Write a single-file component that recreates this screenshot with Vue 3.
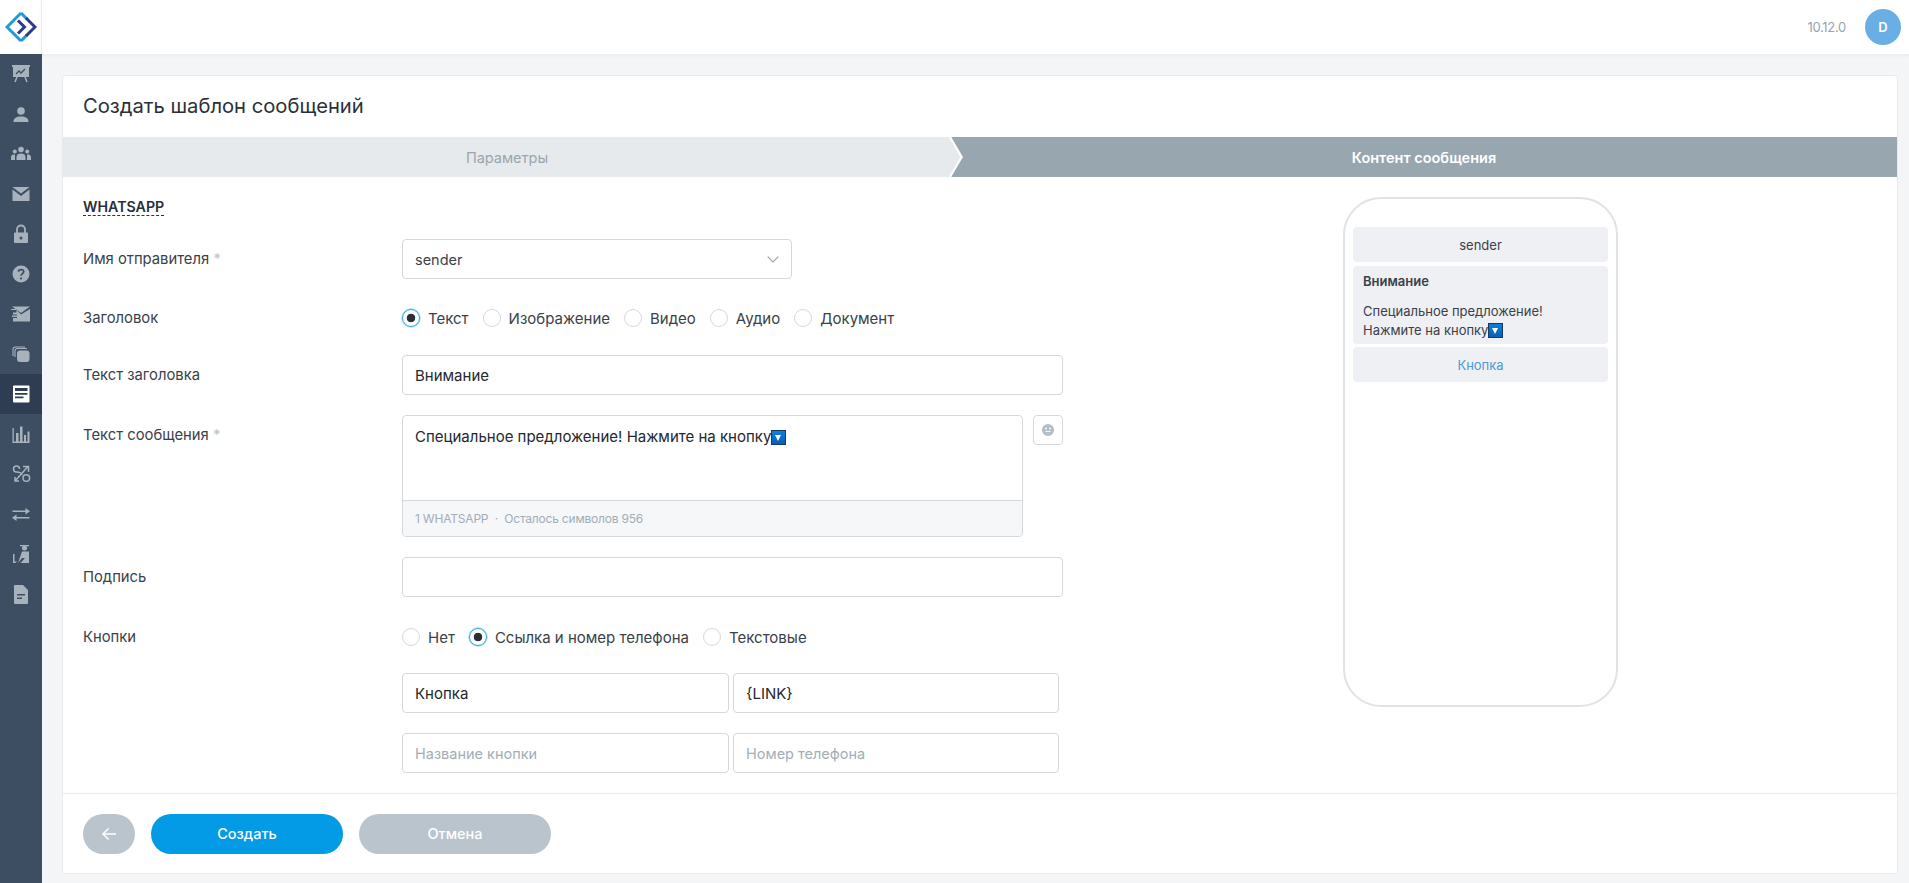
<template>
  <div class="app">
    <aside class="sidebar">
      <div class="logo">
        <svg width="32" height="32" viewBox="0 0 32 32" fill="none">
          <path d="M16 2 2 16 16 30" stroke="#1e9ad6" stroke-width="3" />
          <path d="M16 2 22 8M22 24 16 30" stroke="#1e9ad6" stroke-width="3" />
          <path d="M21 7 30 16 21 25" stroke="#2b3a8f" stroke-width="3" />
          <path d="M13 9.500 19.500 16 13 22.500" stroke="#2b3a8f" stroke-width="3" />
        </svg>
      </div>
      <nav class="nav">
        <div v-for="item in navItems" :key="item.id" class="nav-item" :class="{ active: item.id === 'templates' }">
          <svg width="22" height="22" viewBox="0 0 22 22" v-html="item.svg"></svg>
        </div>
      </nav>
    </aside>

    <div class="main">
      <header class="topbar">
        <span class="version">10.12.0</span>
        <span class="avatar">D</span>
      </header>

      <div class="content">
        <section class="card">
          <h1 class="card-title">Создать шаблон сообщений</h1>

          <div class="steps">
            <div class="step">Параметры</div>
            <div class="step step-active">Контент сообщения</div>
            <svg class="step-chevron" width="16" height="40" viewBox="0 0 16 40" fill="none"><path d="M1 0 12.500 20 1 40" stroke="#fff" stroke-width="2" /></svg>
          </div>

          <div class="body">
            <div class="form">
              <h2 class="channel"><span>WHATSAPP</span></h2>

              <div class="row row-select">
                <label class="label">Имя отправителя <i>*</i></label>
                <div class="select">
                  <span>sender</span>
                  <svg width="12" height="7" viewBox="0 0 12 7" fill="none"><path d="M.7.7 6 6l5.300-5.300" stroke="#9aa6b0" stroke-width="1.200" /></svg>
                </div>
              </div>

              <div class="row row-radio">
                <label class="label">Заголовок</label>
                <div class="radios">
                  <span v-for="opt in headerTypes" :key="opt" class="radio" :class="{ on: opt === 'Текст' }">{{ opt }}</span>
                </div>
              </div>

              <div class="row row-input">
                <label class="label">Текст заголовка</label>
                <div class="input">Внимание</div>
              </div>

              <div class="row row-text">
                <label class="label">Текст сообщения <i>*</i></label>
                <div class="textarea-wrap">
                  <div class="textarea">
                    <div class="textarea-text">Специальное предложение! Нажмите на кнопку<span class="down-emoji"></span></div>
                    <div class="textarea-foot">1 WHATSAPP &nbsp;·&nbsp; Осталось символов 956</div>
                  </div>
                  <button class="emoji-btn">
                    <svg width="12" height="12" viewBox="0 0 12 12"><circle cx="6" cy="6" r="6" fill="#b4bec7" /><circle cx="4" cy="4.500" r=".9" fill="#fff" /><circle cx="8" cy="4.500" r=".9" fill="#fff" /><path d="M3.500 7.500h5" stroke="#fff" stroke-width=".9" /></svg>
                  </button>
                </div>
              </div>

              <div class="row row-input row-sign">
                <label class="label">Подпись</label>
                <div class="input"></div>
              </div>

              <div class="row row-radio row-buttons">
                <label class="label">Кнопки</label>
                <div class="radios">
                  <span v-for="opt in buttonTypes" :key="opt" class="radio" :class="{ on: opt === 'Ссылка и номер телефона' }">{{ opt }}</span>
                </div>
              </div>

              <div class="pairs">
                <div class="input">Кнопка</div>
                <div class="input">{LINK}</div>
                <div class="input placeholder">Название кнопки</div>
                <div class="input placeholder">Номер телефона</div>
              </div>
            </div>

            <div class="preview">
              <div class="phone">
                <div class="bubble sender">sender</div>
                <div class="bubble message">
                  <strong>Внимание</strong>
                  <p>Специальное предложение!<br />Нажмите на кнопку<span class="down-emoji"></span></p>
                </div>
                <div class="bubble link">Кнопка</div>
              </div>
            </div>
          </div>

          <footer class="actions">
            <button class="btn btn-back">
              <svg width="16" height="14" viewBox="0 0 16 14" fill="none"><path d="M15 7H2M7.500 1.500 2 7l5.500 5.500" stroke="#fff" stroke-width="1.500" /></svg>
            </button>
            <button class="btn btn-primary">Создать</button>
            <button class="btn btn-muted">Отмена</button>
          </footer>
        </section>
      </div>
    </div>
  </div>
</template>

<script setup>
const headerTypes = ['Текст', 'Изображение', 'Видео', 'Аудио', 'Документ']
const buttonTypes = ['Нет', 'Ссылка и номер телефона', 'Текстовые']

const c = '#a7b2bd'
const navItems = [
  { id: 'dash', svg: `<path fill="${c}" d="M2 2h18v2h-1v10H3V4H2z"/><path d="M6 11l3-3 2 2 4-4" fill="none" stroke="#3e4e62" stroke-width="1.300"/><path d="M7 14l-2 5M15 14l2 5" stroke="${c}" stroke-width="1.500"/>` },
  { id: 'user', svg: `<circle cx="11" cy="8" r="3.800" fill="${c}"/><path fill="${c}" d="M3.500 19c0-4 3-5.500 7.500-5.500s7.500 1.500 7.500 5.500z"/>` },
  { id: 'group', svg: `<circle cx="11" cy="6.500" r="2.800" fill="${c}"/><circle cx="4.800" cy="8.500" r="2" fill="${c}"/><circle cx="17.200" cy="8.500" r="2" fill="${c}"/><path fill="${c}" d="M6.500 17v-3c0-2.500 2-3.500 4.500-3.500s4.500 1 4.500 3.500v3zM1 17v-2.500C1 12 2.500 11.500 5 11.500 4.900 13 5 15 5 17zM21 17v-2.500c0-2.500-1.500-3-4-3 .1 1.500 0 3.500 0 5.500z"/>` },
  { id: 'mail', svg: `<path fill="${c}" d="M2.500 4h17L11 10.500zM2.500 6.500 11 13l8.500-6.500V18h-17z"/>` },
  { id: 'lock', svg: `<path fill="none" stroke="${c}" stroke-width="1.800" d="M7 10V6.500a4 4 0 0 1 8 0V10"/><path fill="${c}" fill-rule="evenodd" d="M5 9.500h12a1 1 0 0 1 1 1V19a1 1 0 0 1-1 1H5a1 1 0 0 1-1-1v-8.500a1 1 0 0 1 1-1zM11 13.500a1.500 1.500 0 1 0 0 3 1.500 1.500 0 0 0 0-3z"/>` },
  { id: 'help', svg: `<circle cx="11" cy="11" r="8.500" fill="${c}"/><path d="M8.500 8.800c0-3 5.200-3 5.200 0 0 1.900-2.600 1.900-2.600 3.900" fill="none" stroke="#3e4e62" stroke-width="1.700"/><circle cx="11" cy="15.500" r="1.100" fill="#3e4e62"/>` },
  { id: 'send', svg: `<path fill="${c}" d="M2 3.500h18L11 10zM1 6h5v1H1zM6.500 7 11 11.500 20 6v12.500H3V15h4v-1H2v-1.500h5v-1H3V9.500h3.500z"/>` },
  { id: 'stack', svg: `<path fill="none" stroke="${c}" stroke-width="1.100" d="M3 13V6.500C3 4.800 4 4 5.500 4H15M5 14V8c0-1.700 1-2.500 2.500-2.500H17"/><rect x="7" y="7.500" width="12.500" height="11.500" rx="3" fill="${c}"/>` },
  { id: 'templates', svg: `<path fill="#fff" fill-rule="evenodd" d="M4 2.500h14.500a1 1 0 0 1 1 1v15a1 1 0 0 1-1 1H4a1 1 0 0 1-1-1v-15a1 1 0 0 1 1-1zM5 5v3h12.500V5zM5 10v1.800h12.500V10zM5 13.500v1.800h8.500v-1.800z"/>` },
  { id: 'stats', svg: `<path fill="${c}" d="M2.500 5h1.300v13.500H2.500zM6 10h2.500v8.500H6zM10 3.500h2.500v15H10zM14 12h2v6.500h-2zM17.500 8.500H19.500v10h-2zM2.500 18.500h17V20h-17z"/>` },
  { id: 'routes', svg: `<path fill="none" stroke="${c}" stroke-width="1.500" d="M17.500 4 5 18M9.500 6a3 3 0 1 0-3 3c3 0 5 .5 5.500 3M5 14v4h4M13 15a3.300 3.300 0 1 0 6.600 0 3.300 3.300 0 0 0-6.600 0zM13 3.500h5.500V9"/>` },
  { id: 'transfer', svg: `<path fill="${c}" d="M2.500 7.500h13V5l4.500 3.300-4.500 3.300V9h-13zM6.500 11.500V14h13v1.500h-13V18L2 14.800z"/>` },
  { id: 'report', svg: `<circle cx="14.500" cy="5" r="2.500" fill="${c}"/><path fill="${c}" d="M10 2h9v1.200h-9zM12 8.500h7v11.500h-8.500L15 15l-3 0-4 5H8zM3 11h1.500v7.500H7L5.500 20H3z"/>` },
  { id: 'doc', svg: `<path fill="${c}" fill-rule="evenodd" d="M5 2h8l5 5v13a1 1 0 0 1-1 1H5a1 1 0 0 1-1-1V3a1 1 0 0 1 1-1zM7 11v1.500h8V11zM7 14.500V16h5v-1.500z"/>` }
]
</script>

<style>
html, body { margin: 0; background: #f3f5f7; }
</style>

<style scoped>
.app {
  display: flex;
  height: 883px;
  overflow: hidden;
  font-family: Inter, "Noto Sans", sans-serif;
  color: #2f3640;
}

.sidebar {
  width: 42px;
  flex: none;
  display: flex;
  flex-direction: column;
  background: #3e4e62;
}

.logo {
  height: 54px;
  display: flex;
  align-items: center;
  justify-content: center;
  background: #fff;
  border-right: 1px solid #eef0f2;
  box-sizing: border-box;
}

.nav-item {
  height: 40px;
  display: flex;
  align-items: center;
  justify-content: center;
}
.nav-item.active { background: #2e3d51; }

.main {
  flex: 1;
  min-width: 0;
  display: flex;
  flex-direction: column;
}

.topbar {
  height: 54px;
  flex: none;
  display: flex;
  align-items: center;
  justify-content: flex-end;
  gap: 19px;
  padding: 0 8px 0 0;
  background: #fff;
  box-shadow: 0 1px 4px rgba(60, 70, 90, 0.08);
  position: relative;
}
.version { font-size: 13px; color: #97a3af; letter-spacing: -0.3px; }
.avatar {
  width: 36px;
  height: 36px;
  border-radius: 50%;
  display: flex;
  align-items: center;
  justify-content: center;
  background: #6aaee6;
  color: #fff;
  font-size: 13px;
  font-weight: 600;
}

.content {
  flex: 1;
  min-height: 0;
  padding: 21px 11px 9px 20px;
}

.card {
  height: 100%;
  box-sizing: border-box;
  display: flex;
  flex-direction: column;
  background: #fff;
  border: 1px solid #e8ebee;
  border-radius: 4px;
}

.card-title {
  margin: 0;
  height: 61px;
  box-sizing: border-box;
  padding: 15px 0 0 20px;
  font-size: 20.200px;
  line-height: 30px;
  font-weight: 400;
  color: #2a3038;
}

.steps {
  display: flex;
  height: 40px;
  flex: none;
  background: #e7eaec;
  font-size: 14.500px;
  color: #9aa6ae;
  position: relative;
}
.step {
  width: 888px;
  flex: none;
  display: flex;
  align-items: center;
  justify-content: center;
}
.step-active {
  flex: 1;
  width: auto;
  background: #98a6af;
  color: #fff;
  font-weight: 600;
  clip-path: polygon(0 0, 100% 0, 100% 100%, 0 100%, 12px 50%);
}
.step-chevron {
  position: absolute;
  left: 886px;
  top: 0;
}

.body {
  flex: 1;
  min-height: 0;
  display: flex;
  padding: 0 19px 0 20px;
}

.form { width: 980px; flex: none; }

.channel {
  margin: 20px 0 0;
  font-size: 14.200px;
  line-height: 20px;
  font-weight: 600;
  color: #2a3038;
}
.channel span { border-bottom: 1px dashed #2a3038; display: inline-block; line-height: 17px; }

.row { display: flex; font-size: 14.800px; }
.label {
  width: 319px;
  flex: none;
  color: #3a414a;
}
.label i { color: #bcc4cb; font-style: normal; }

.row-select { margin-top: 22px; align-items: center; }
.row-radio { margin-top: 19px; height: 40px; align-items: center; }
.row-input { margin-top: 17px; align-items: center; }
.row-text { margin-top: 20px; }
.row-text .label { padding-top: 10px; line-height: 20px; }
.row-sign { margin-top: 20px; }
.row-buttons { margin-top: 20px; }

.select,
.input {
  height: 40px;
  box-sizing: border-box;
  display: flex;
  align-items: center;
  border: 1px solid #d3d8dd;
  border-radius: 4px;
  padding: 0 12px;
  font-size: 15px;
  color: #23282e;
  background: #fff;
}
.select {
  width: 390px;
  justify-content: space-between;
  color: #3a414a;
  font-size: 14.500px;
}
.row > .input { width: 661px; }

.radios { display: flex; align-items: center; gap: 14px; font-size: 15px; }
.radio {
  display: flex;
  align-items: center;
  color: #3a414a;
}
.radio::before {
  content: "";
  width: 16px;
  height: 16px;
  margin-right: 8px;
  border: 1px solid #d3d8dd;
  border-radius: 50%;
  background: #fff;
}
.radio.on::before {
  border-color: #2aa3df;
  background: radial-gradient(circle, #2a3038 0 4px, #fff 4.600px);
  box-shadow: 0 0 0 1px #bfe3f6;
}

.textarea-wrap { display: flex; gap: 10px; align-items: flex-start; }
.textarea {
  width: 621px;
  height: 122px;
  box-sizing: border-box;
  display: flex;
  flex-direction: column;
  border: 1px solid #d3d8dd;
  border-radius: 4px;
  overflow: hidden;
}
.textarea-text {
  flex: 1;
  padding: 11px 12px;
  font-size: 15px;
  line-height: 20px;
  color: #23282e;
}
.textarea-foot {
  height: 36px;
  box-sizing: border-box;
  padding: 0 12px;
  display: flex;
  align-items: center;
  background: #f5f7f9;
  border-top: 1px solid #d3d8dd;
  font-size: 12px;
  color: #a2adb6;
  letter-spacing: -0.2px;
}
.emoji-btn {
  width: 30px;
  height: 30px;
  padding: 0;
  display: flex;
  align-items: center;
  justify-content: center;
  background: #fff;
  border: 1px solid #d3d8dd;
  border-radius: 4px;
}

.down-emoji {
  display: inline-block;
  width: 15px;
  height: 15px;
  vertical-align: -3px;
  box-sizing: border-box;
  border: 1px solid #163a66;
  background: linear-gradient(#0e7fdc, #0a5fb4);
  position: relative;
}
.down-emoji::after {
  content: "";
  position: absolute;
  left: 3px;
  top: 4px;
  border-left: 3.500px solid transparent;
  border-right: 3.500px solid transparent;
  border-top: 6px solid #fff;
}

.pairs {
  margin: 16px 0 0 319px;
  display: grid;
  grid-template-columns: 327px 326px;
  grid-auto-rows: 40px;
  column-gap: 4px;
  row-gap: 20px;
}
.placeholder { color: #a2adb6; font-size: 14.500px; }

.preview {
  flex: 1;
  min-width: 0;
  padding-left: 280px;
  padding-top: 20px;
}
.phone {
  width: 275px;
  height: 510px;
  box-sizing: border-box;
  border: 2px solid #dfe3e7;
  border-radius: 38px;
  padding: 28px 8px 0;
  display: flex;
  flex-direction: column;
  font-size: 13px;
  color: #3a414a;
}
.bubble {
  background: #eef0f3;
  border-radius: 4px;
}
.sender,
.link {
  height: 35px;
  display: flex;
  align-items: center;
  justify-content: center;
}
.message {
  margin-top: 4px;
  padding: 6px 10px 0;
  height: 78px;
  box-sizing: border-box;
  line-height: 19px;
}
.message strong { font-weight: 600; display: block; }
.message p { margin: 11px 0 0; }
.link { margin-top: 3px; color: #4a9bd8; }

.actions {
  flex: none;
  height: 80px;
  box-sizing: border-box;
  display: flex;
  align-items: center;
  gap: 16px;
  padding: 0 0 0 20px;
  border-top: 1px solid #e8ebee;
}
.btn {
  height: 40px;
  width: 192px;
  border: 0;
  border-radius: 20px;
  color: #fff;
  font-family: inherit;
  font-size: 14.500px;
  font-weight: 500;
  display: flex;
  align-items: center;
  justify-content: center;
}
.btn-back { width: 52px; background: #bac4cc; }
.btn-primary { background: #039be5; }
.btn-muted { background: #bac4cc; }
</style>
